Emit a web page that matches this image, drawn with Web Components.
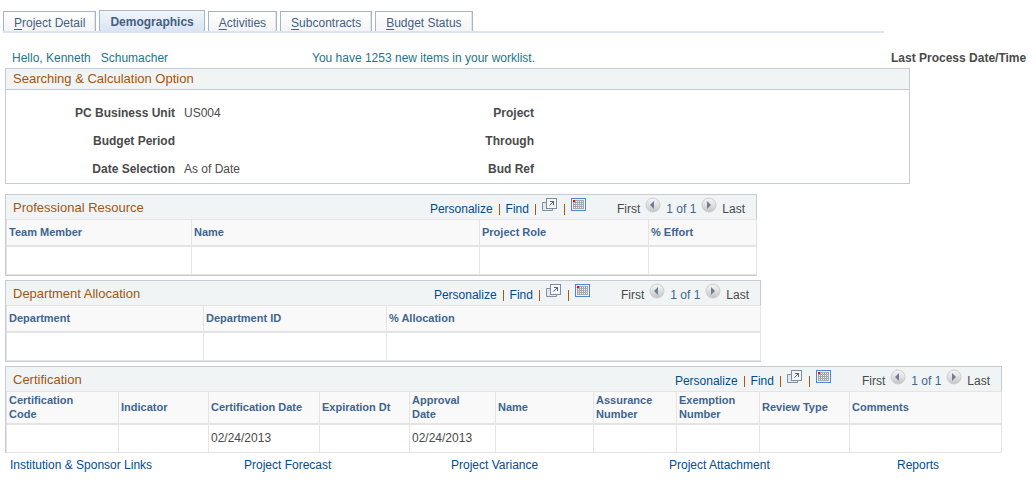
<!DOCTYPE html>
<html lang="en">
<head>
<meta charset="utf-8">
<title>Demographics</title>
<style>
  :root {
    --link: #004b91; --head: #3e6590; --title: #a5550f; --teal: #1d7587;
    --edge: #c5cad3; --rule: #e4e4e4; --bar: #f0f4f5; --text: #4a4a4a;
  }
  body { margin: 0; background: #fff; color: var(--text); font: 12px/16px "Liberation Sans", Arial, sans-serif; }
  main { padding: 0 5px; }
</style>
</head>
<body>
<tab-bar>
  <tab-item key="P">roject Detail</tab-item>
  <tab-item selected>Demographics</tab-item>
  <tab-item key="A">ctivities</tab-item>
  <tab-item key="S">ubcontracts</tab-item>
  <tab-item key="B">udget Status</tab-item>
</tab-bar>
<main>
  <greeting-row>
    <span slot="hello">Hello, Kenneth &nbsp;&nbsp;Schumacher</span>
    <span slot="message">You have 1253 new items in your worklist.</span>
    <span slot="process">Last Process Date/Time</span>
  </greeting-row>
  <group-box>
    <span slot="heading">Searching &amp; Calculation Option</span>
    <field-item label="PC Business Unit">US004</field-item>
    <field-item label="Project"></field-item>
    <field-item label="Budget Period"></field-item>
    <field-item label="Through"></field-item>
    <field-item label="Date Selection">As of Date</field-item>
    <field-item label="Bud Ref"></field-item>
  </group-box>
  <data-grid style="--share:752" columns="Team Member:185|Name:288|Project Role:169|% Effort:108" cells="|||">Professional Resource</data-grid>
  <data-grid style="--share:756" columns="Department:197|Department ID:183|% Allocation:374" cells="||">Department Allocation</data-grid>
  <data-grid open-end style="--share:997" columns="Certification<br>Code:112|Indicator:90|Certification Date:111|Expiration Dt:90|Approval<br>Date:86|Name:98|Assurance<br>Number:83|Exemption<br>Number:83|Review Type:90|Comments:152" cells="||02/24/2013||02/24/2013|||||">Certification</data-grid>
  <link-row>
    <a-link>Institution &amp; Sponsor Links</a-link>
    <a-link>Project Forecast</a-link>
    <a-link>Project Variance</a-link>
    <a-link>Project Attachment</a-link>
    <a-link>Reports</a-link>
  </link-row>
</main>

<script>
const define = (name, render) => customElements.define(name, class extends HTMLElement {
  constructor() { super(); this.attachShadow({ mode: "open" }); }
  connectedCallback() { this.shadowRoot.innerHTML = render(this); }
});

define("tab-bar", () => `
  <style>
    :host { display: grid; grid-template-columns: 881fr 149fr; padding: 10px 3px 0; }
    nav { display: flex; align-items: flex-end; gap: 3px; border-bottom: 2px solid #d9e4f4; }
  </style>
  <nav><slot></slot></nav>`);

define("tab-item", el => `
  <style>
    :host { display: block; }
    a { display: block; box-sizing: border-box; height: 20px; padding: 3px 10px 0;
        border: 1px solid #a9b4c0; border-bottom: 0; box-shadow: inset -1px 0 #e1e5e9;
        background: linear-gradient(#fff, #f3f4f6); color: #46607f; text-decoration: none; white-space: nowrap; }
    :host([selected]) a { height: 21px; background: linear-gradient(#f0f5fb, #d9e4f4); font-weight: bold; box-shadow: none; }
    u { text-underline-offset: 2px; }
  </style>
  <a href="#">${el.hasAttribute("key") ? `<u>${el.getAttribute("key")}</u>` : ""}<slot></slot></a>`);

define("greeting-row", () => `
  <style>
    :host { display: grid; grid-template-columns: 300fr 579fr 137fr; padding: 17px 3px 2px 7px; color: var(--teal); white-space: nowrap; }
    b { color: var(--text); }
  </style>
  <slot name="hello"></slot><slot name="message"></slot><b><slot name="process"></slot></b>`);

define("group-box", () => `
  <style>
    :host { display: grid; grid-template-columns: 905fr 121fr; margin-bottom: 10px; }
    section { border: 1px solid var(--edge); }
    h2 { margin: 0; padding: 0 7px; font-size: 13px; line-height: 20px; font-weight: normal; color: var(--title);
         background: var(--bar); border-bottom: 1px solid var(--edge); }
    div { display: grid; grid-template-columns: 359fr 544fr; padding: 9px 0 10px; }
  </style>
  <section><h2><slot name="heading"></slot></h2><div><slot></slot></div></section>`);

define("field-item", el => `
  <style>
    :host { display: grid; grid-template-columns: 169px 1fr; gap: 9px; line-height: 28px; height: 28px; }
    :host(:last-of-type), :host(:nth-of-type(5)) { height: 18px; }
    b { text-align: right; }
  </style>
  <b>${el.getAttribute("label")}</b><span><slot></slot></span>`);

define("circle-arrow", el => `
  <style>
    :host { display: block; height: 16px; }
    button { display: block; width: 16px; height: 16px; padding: 0; border: 0; background: none; }
    svg { display: block; }
  </style>
  <button aria-label="${el.getAttribute("label")}"><svg width="16" height="16" viewBox="0 0 16 16">
    <defs><linearGradient id="g" x1="0" y1="0" x2="0" y2="1"><stop offset="0" stop-color="#f6f6f6"/><stop offset=".55" stop-color="#dedede"/><stop offset="1" stop-color="#c2c2c2"/></linearGradient></defs>
    <circle cx="8" cy="8" r="7" fill="url(#g)" stroke="#cdcdcd"/>
    <path d="${el.getAttribute("label") === "Next" ? "M6 4l4 4-4 4z" : "M9 4L5 8l4 4z"}" fill="#6c7f95"/>
  </svg></button>`);

define("grid-tools", () => `
  <style>
    :host { display: flex; align-items: flex-start; white-space: nowrap; line-height: 16px; }
    a { color: var(--link); text-decoration: none; }
    .text { padding-top: 6px; }
    .bar { padding-top: 9px; margin: 0 6px; }
    .bar::before { content: ""; display: block; width: 1px; height: 11px; background: #b0560c; }
    .icon { padding-top: 3px; }
    svg { display: block; }
    .nav { display: flex; gap: 5px; margin-left: 30px; }
    .count { color: var(--head); }
    circle-arrow { margin-top: 2px; }
  </style>
  <a class="text" href="#">Personalize</a><span class="bar"></span>
  <a class="text" href="#">Find</a><span class="bar"></span>
  <a class="icon" href="#" aria-label="View all"><svg width="16" height="14" viewBox="0 0 16 14">
    <path d="M4 4.500H.5v8h10V10" fill="#e3e8ee" stroke="#8491a2"/>
    <rect x="4.500" y=".5" width="10" height="10" fill="#f6f8fb" stroke="#7e8da2"/>
    <path d="M8 3.500h3.500V7M11.500 3.500L7.500 7.500" fill="none" stroke="#4f647f"/></svg></a><span class="bar"></span>
  <a class="icon" href="#" aria-label="Download"><svg width="16" height="14" viewBox="0 0 16 14">
    <rect x=".5" y=".5" width="14" height="12" fill="#f1f3f7" stroke="#4f83d8"/>
    <path d="M2 2.500h11M2 4.500h11M2 6.500h11M2 8.500h11M2 10.500h11M2.500 2v9M4.500 2v9M6.500 2v9M8.500 2v9M10.500 2v9M12.500 2v9" stroke="#a3a8b0"/>
    <rect x="2" y="2" width="2" height="2" fill="#f00"/></svg></a>
  <span class="nav"><span class="text">First</span><circle-arrow label="Previous"></circle-arrow>
  <span class="text count">1 of 1</span><circle-arrow label="Next"></circle-arrow><span class="text">Last</span></span>`);

define("data-grid", el => {
  const cols = el.getAttribute("columns").split("|").map(c => c.split(":"));
  const cells = el.getAttribute("cells").split("|");
  return `
  <style>
    :host { display: block; width: calc(var(--share) / 1026 * 100%); margin-bottom: 4px; }
    section { border: 1px solid var(--edge); }
    :host([open-end]) section { border-bottom: 0; }
    header { display: flex; justify-content: space-between; height: 24px; background: var(--bar); padding: 0 11px 0 7px; }
    h2 { margin: 0; font-size: 13px; line-height: 26px; font-weight: normal; color: var(--title); }
    table { width: 100%; table-layout: fixed; border-collapse: collapse; }
    th, td { box-sizing: border-box; padding: 0 2px; text-align: left; border: 1px solid var(--rule); }
    th { height: 26px; font-size: 11px; line-height: 14px; color: var(--head); background: #f9f9f9; border-bottom-width: 2px; white-space: nowrap; }
    :host([open-end]) th { height: 32px; }
    td { height: 29px; }
  </style>
  <section>
    <header><h2><slot></slot></h2><grid-tools></grid-tools></header>
    <table>
      <colgroup>${cols.map(c => `<col style="width:${c[1]}px">`).join("")}</colgroup>
      <thead><tr>${cols.map(c => `<th scope="col">${c[0]}</th>`).join("")}</tr></thead>
      <tbody><tr>${cells.map(c => `<td>${c}</td>`).join("")}</tr></tbody>
    </table>
  </section>`;
});

define("link-row", () => `
  <style>
    :host { display: grid; grid-template-columns: 234fr 207fr 218fr 228fr 134fr; padding-left: 5px; white-space: nowrap; }
  </style>
  <slot></slot>`);

define("a-link", () => `
  <style>
    :host { display: block; }
    a { color: var(--link); text-decoration: none; }
  </style>
  <a href="#"><slot></slot></a>`);
</script>
</body>
</html>
